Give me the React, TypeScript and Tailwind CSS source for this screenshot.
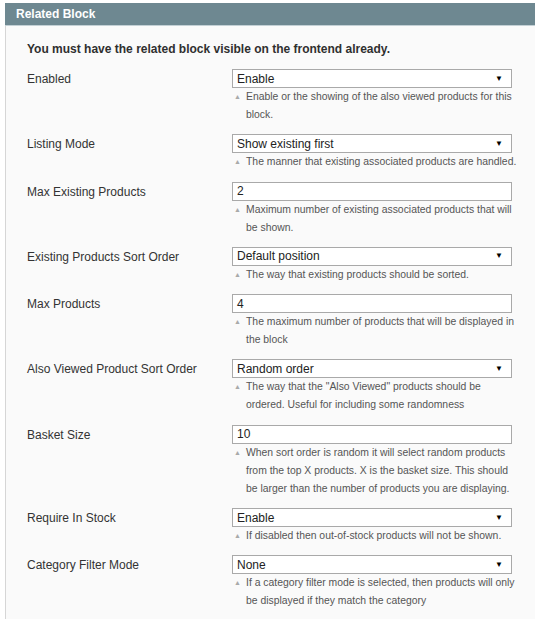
import React from "react";

type Row = {
  label: string;
  kind: "select" | "input";
  value: string;
  hint: string;
};

const rows: Row[] = [
  { label: "Enabled", kind: "select", value: "Enable", hint: "Enable or the showing of the also viewed products for this block." },
  { label: "Listing Mode", kind: "select", value: "Show existing first", hint: "The manner that existing associated products are handled." },
  { label: "Max Existing Products", kind: "input", value: "2", hint: "Maximum number of existing associated products that will be shown." },
  { label: "Existing Products Sort Order", kind: "select", value: "Default position", hint: "The way that existing products should be sorted." },
  { label: "Max Products", kind: "input", value: "4", hint: "The maximum number of products that will be displayed in the block" },
  { label: "Also Viewed Product Sort Order", kind: "select", value: "Random order", hint: "The way that the \"Also Viewed\" products should be ordered. Useful for including some randomness" },
  { label: "Basket Size", kind: "input", value: "10", hint: "When sort order is random it will select random products from the top X products. X is the basket size. This should be larger than the number of products you are displaying." },
  { label: "Require In Stock", kind: "select", value: "Enable", hint: "If disabled then out-of-stock products will not be shown." },
  { label: "Category Filter Mode", kind: "select", value: "None", hint: "If a category filter mode is selected, then products will only be displayed if they match the category" },
];

export default function App() {
  return (
    <div
      className="w-[535px] h-[619px] bg-white pt-[3px] pl-[5px] overflow-hidden"
      style={{ fontFamily: '"Liberation Sans", Arial, sans-serif' }}
    >
      <div className="h-[22px] bg-[#6e8891] pl-[11px] flex items-center text-[12px] font-bold text-white">
        Related Block
      </div>
      <div className="h-[1px] bg-[#c3d0d5]" />
      <div className="border-l border-[#d6d6d6] bg-[#fafafa] h-[600px] pl-[21px] pt-[16px]">
        <div className="text-[12px] font-bold text-[#2f2f2f] leading-[15px]">
          You must have the related block visible on the frontend already.
        </div>
        <div className="mt-[12px] flex flex-col gap-[10.3px]">
          {rows.map((r) => (
            <div key={r.label} className="flex">
              <div className="w-[205px] shrink-0 text-[12px] text-[#333] leading-[19px] pt-[1px]">{r.label}</div>
              <div className="w-[290px] shrink-0">
                <div className="w-[280px] h-[19px] border border-[#a9a9a9] bg-white flex items-center justify-between pl-[4px] pr-[8px] text-[12px] text-[#222]">
                  <span>{r.value}</span>
                  {r.kind === "select" && <span className="text-[8px] text-black">▼</span>}
                </div>
                <div className="relative pl-[14px] text-[10.4px] leading-[18px] text-[#555]">
                  <span className="absolute left-[2px] top-[0px] text-[7px] text-[#a9a9a9]">▲</span>
                  {r.hint}
                </div>
              </div>
            </div>
          ))}
        </div>
      </div>
    </div>
  );
}
